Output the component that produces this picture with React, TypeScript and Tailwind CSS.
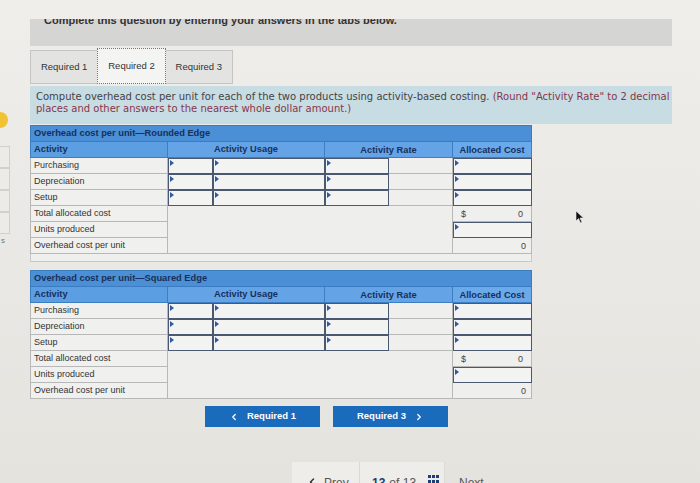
import { ChevronLeft, ChevronRight } from 'lucide-react';

const gridCols = 'grid grid-cols-[138px_45px_112px_64px_64px_79px] w-[502px]';

const Arrow = () => (
  <span className="absolute left-[1px] top-[1px] w-0 h-0 border-y-[3px] border-y-transparent border-l-[4px] border-l-[#2c5ba3]" />
);

const InputCell = () => (
  <div className="relative h-[16px] bg-[#f3f3f1] border border-[#4a5872]">
    <Arrow />
  </div>
);

const Label = ({ children }: { children: string }) => (
  <div className="h-[16px] bg-[#f0f0ee] border-l border-r border-b border-[#b8b8b8] pl-[3px] text-[9px] leading-[15px] text-[#333]">
    {children}
  </div>
);

const Plain = () => <div className="h-[16px] bg-[#efefed] border-r border-b border-[#b8b8b8]" />;

function OverheadTable({ title, filler }: { title: string; filler?: boolean }) {
  const activities = ['Purchasing', 'Depreciation', 'Setup'];
  return (
    <div className={gridCols}>
      <div className="col-span-6 h-[17px] bg-[#4b8fd6] border border-[#3d7bc0] pl-[3px] text-[9.3px] font-bold leading-[15px] text-[#18305a]">
        {title}
      </div>
      <div className="h-[16px] bg-[#5b9ee2] border-l border-r border-b border-[#3f7dc2] pl-[3px] text-[9.3px] font-bold leading-[15px] text-[#18305a]">
        Activity
      </div>
      <div className="col-span-2 h-[16px] bg-[#64a4e6] border-r border-b border-[#3f7dc2] text-center text-[9.3px] font-bold leading-[15px] text-[#18305a]">
        Activity Usage
      </div>
      <div className="col-span-2 h-[16px] bg-[#64a4e6] border-r border-b border-[#3f7dc2] text-center text-[9.3px] font-bold leading-[17px] text-[#18305a]">
        Activity Rate
      </div>
      <div className="h-[16px] bg-[#6aa9ea] border-r border-b border-[#3f7dc2] text-center text-[9.3px] font-bold leading-[17px] text-[#18305a]">
        Allocated Cost
      </div>

      {activities.map((a) => (
        <div key={a} className="contents">
          <Label>{a}</Label>
          <InputCell />
          <InputCell />
          <InputCell />
          <Plain />
          <InputCell />
        </div>
      ))}

      <Label>Total allocated cost</Label>
      <div className="col-span-4 row-span-3 bg-[#eeeeec] border-r border-b border-[#b8b8b8]" />
      <div className="h-[16px] bg-[#efefed] border-r border-b border-[#b8b8b8] flex justify-between px-[8px] text-[9px] leading-[16px] text-[#444]">
        <span>$</span>
        <span>0</span>
      </div>
      <Label>Units produced</Label>
      <InputCell />
      <Label>Overhead cost per unit</Label>
      <div className="h-[16px] bg-[#efefed] border-r border-b border-[#b8b8b8] text-right pr-[5px] text-[9px] leading-[17px] text-[#444]">
        0
      </div>
      {filler && <div className="col-span-6 h-[8px] bg-[#efefed] border-l border-r border-b border-[#c8c8c8]" />}
    </div>
  );
}

export default function App() {
  return (
    <div className="relative flex w-[700px] h-[483px] overflow-hidden bg-linear-to-b from-[#efeeeb] to-[#e5e3de] font-['Liberation_Sans',Arial,sans-serif]">
      {/* left edge of the side panel */}
      <div className="w-[10px] shrink-0 flex flex-col">
        <div className="h-[112px]" />
        <div className="-ml-[8px] w-[16px] h-[16px] rounded-full bg-[#f1c232]" />
        <div className="h-[18px]" />
        {[0, 1, 2, 3].map((i) => (
          <div key={i} className="h-[22px] border-y border-r border-[#d2d0cb] bg-[#ecebe7]" />
        ))}
        <div className="pl-[1px] text-[8px] text-[#777] leading-[14px]">s</div>
      </div>

      <div className="ml-[20px] w-[642px] pt-[19px]">
        <div className="h-[27px] overflow-hidden bg-[#d5d5d3]">
          <p className="-mt-[5px] pl-[14px] text-[11px] font-bold leading-[13px] text-[#333] whitespace-nowrap">
            Complete this question by entering your answers in the tabs below.
          </p>
        </div>

        <div className="mt-[4px] flex h-[34px] w-[203px] border border-[#c4c4c4] bg-[#e3e3e1] text-[9.5px] text-[#333]">
          <div className="w-[67px] flex items-center justify-center">Required 1</div>
          <div className="-mt-[3px] h-[36px] w-[69px] flex items-center justify-center bg-[#f4f4f2] border border-dotted border-[#777]">
            Required 2
          </div>
          <div className="w-[67px] flex items-center justify-center">Required 3</div>
        </div>

        <div className="mt-[2px] h-[38px] bg-[#c8dce4] px-[6px] pt-[5px] font-['DejaVu_Sans',Verdana,sans-serif] text-[10px] leading-[12px] whitespace-nowrap">
          <p className="text-[#444]">
            Compute overhead cost per unit for each of the two products using activity-based costing.{' '}
            <span className="text-[#87364a]">(Round "Activity Rate" to 2 decimal</span>
          </p>
          <p className="text-[#87364a]">places and other answers to the nearest whole dollar amount.)</p>
        </div>

        <div className="mt-[1px]">
          <OverheadTable title="Overhead cost per unit—Rounded Edge" filler />
        </div>
        <div className="mt-[8px]">
          <OverheadTable title="Overhead cost per unit—Squared Edge" />
        </div>

        <div className="mt-[7px] flex gap-[13px] pl-[175px]">
          <button className="w-[115px] h-[21px] bg-[#1b6bbd] text-white text-[9.5px] font-bold flex items-center justify-center gap-[8px]">
            <ChevronLeft size={10} strokeWidth={3} />
            Required 1
          </button>
          <button className="w-[115px] h-[21px] bg-[#1b6bbd] text-white text-[9.5px] font-bold flex items-center justify-center gap-[8px]">
            Required 3
            <ChevronRight size={10} strokeWidth={3} />
          </button>
        </div>

        <div className="mt-[35px] ml-[262px] flex h-[24px] text-[12px] text-[#555]">
          <div className="w-[68px] border-r border-[#dcdad5] bg-[#eeede9] pl-[14px] pt-[12px] flex gap-[6px]">
            <ChevronLeft size={12} strokeWidth={3} className="mt-[2px] text-[#333]" />
            Prev
          </div>
          <div className="w-[85px] border-r border-[#dcdad5] bg-[#eeede9] pl-[12px] pt-[12px] flex gap-[4px]">
            <span className="font-bold text-[#1d3f73]">13</span>
            <span>of 13</span>
            <span className="ml-[8px] mt-[1px] grid grid-cols-3 gap-[1px] h-[8px]">
              {[0, 1, 2, 3, 4, 5].map((i) => (
                <span key={i} className="w-[3px] h-[3px] bg-[#1d3f73]" />
              ))}
            </span>
          </div>
          <div className="pl-[14px] pt-[12px]">Next</div>
        </div>
      </div>

      {/* mouse pointer */}
      <svg className="absolute left-[575px] top-[210px]" width="10" height="14" viewBox="0 0 10 14">
        <path d="M1 1 L1 11 L3.5 8.5 L5.5 13 L7 12.3 L5 8 L8.5 8 Z" fill="#111" stroke="#eee" strokeWidth="0.6" />
      </svg>
    </div>
  );
}
